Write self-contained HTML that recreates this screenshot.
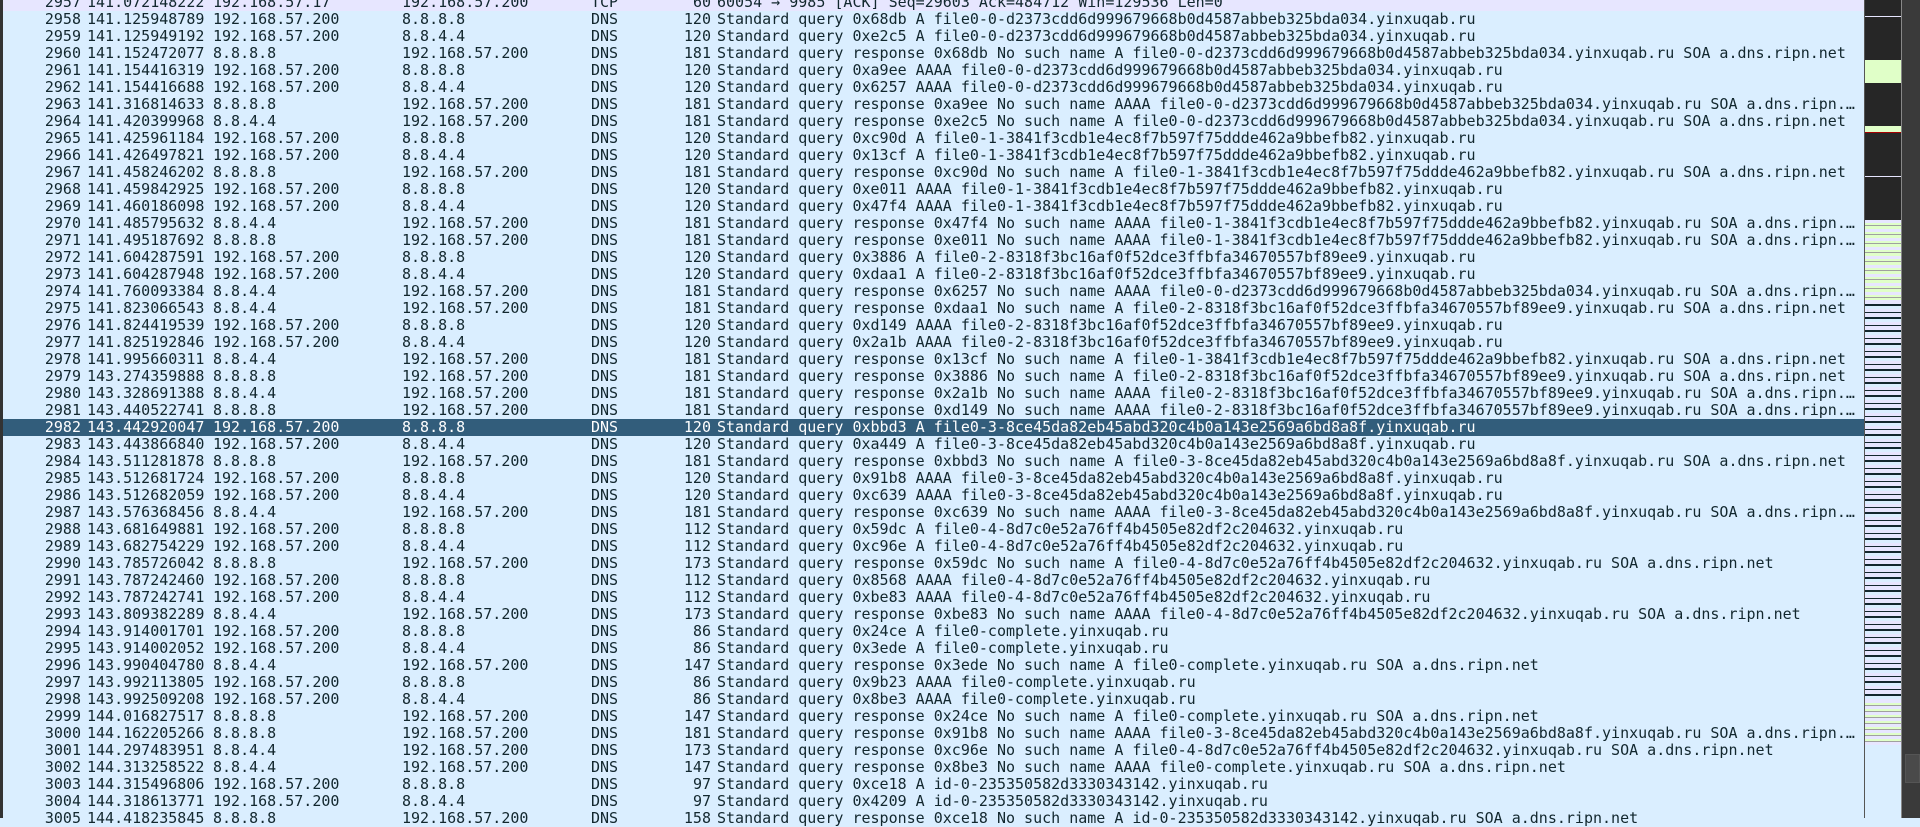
<!DOCTYPE html>
<html><head><meta charset="utf-8"><style>
html,body{margin:0;padding:0;}
body{width:1920px;height:818px;overflow:hidden;background:#daeeff;position:relative;font-family:"DejaVu Sans Mono","Liberation Mono",monospace;font-size:15px;color:#12272e;}
#list{position:absolute;left:0;top:-6px;width:1864px;}
.r{position:relative;height:17px;line-height:17px;background:#daeeff;white-space:pre;}
.r.t{background:#e7e6ff;}
.r.s{background:#325d7b;color:#fff;}
.r span{position:absolute;top:0;}
.a{left:0;width:81px;text-align:right;}
.b{left:87px;}
.c{left:213px;}
.d{left:402px;}
.e{left:591px;}
.f{left:650px;width:61px;text-align:right;}
.g{left:717px;width:1146px;overflow:hidden;text-overflow:ellipsis;}
#edge{position:absolute;left:0;top:0;width:3px;height:818px;background:#333;}
#mm{position:absolute;left:1864px;top:0;width:37px;height:818px;background:#daeeff;border-left:1px solid #555;box-sizing:border-box;}
#sb{position:absolute;left:1901px;top:0;width:19px;height:818px;background:#3a3a3a;border-left:1px solid #888;box-sizing:border-box;}
#thumb{position:absolute;left:3px;top:754px;width:13px;height:27px;background:#4a4a4a;border:1px solid #555;}
.m{position:absolute;left:0;width:36px;}
</style></head><body>
<div id="list">
<div class="r t"><span class="a">2957</span><span class="b">141.072148222</span><span class="c">192.168.57.17</span><span class="d">192.168.57.200</span><span class="e">TCP</span><span class="f">60</span><span class="g">60054 → 9985 [ACK] Seq=29603 Ack=484712 Win=129536 Len=0</span></div>
<div class="r"><span class="a">2958</span><span class="b">141.125948789</span><span class="c">192.168.57.200</span><span class="d">8.8.8.8</span><span class="e">DNS</span><span class="f">120</span><span class="g">Standard query 0x68db A file0-0-d2373cdd6d999679668b0d4587abbeb325bda034.yinxuqab.ru</span></div>
<div class="r"><span class="a">2959</span><span class="b">141.125949192</span><span class="c">192.168.57.200</span><span class="d">8.8.4.4</span><span class="e">DNS</span><span class="f">120</span><span class="g">Standard query 0xe2c5 A file0-0-d2373cdd6d999679668b0d4587abbeb325bda034.yinxuqab.ru</span></div>
<div class="r"><span class="a">2960</span><span class="b">141.152472077</span><span class="c">8.8.8.8</span><span class="d">192.168.57.200</span><span class="e">DNS</span><span class="f">181</span><span class="g">Standard query response 0x68db No such name A file0-0-d2373cdd6d999679668b0d4587abbeb325bda034.yinxuqab.ru SOA a.dns.ripn.net</span></div>
<div class="r"><span class="a">2961</span><span class="b">141.154416319</span><span class="c">192.168.57.200</span><span class="d">8.8.8.8</span><span class="e">DNS</span><span class="f">120</span><span class="g">Standard query 0xa9ee AAAA file0-0-d2373cdd6d999679668b0d4587abbeb325bda034.yinxuqab.ru</span></div>
<div class="r"><span class="a">2962</span><span class="b">141.154416688</span><span class="c">192.168.57.200</span><span class="d">8.8.4.4</span><span class="e">DNS</span><span class="f">120</span><span class="g">Standard query 0x6257 AAAA file0-0-d2373cdd6d999679668b0d4587abbeb325bda034.yinxuqab.ru</span></div>
<div class="r"><span class="a">2963</span><span class="b">141.316814633</span><span class="c">8.8.8.8</span><span class="d">192.168.57.200</span><span class="e">DNS</span><span class="f">181</span><span class="g">Standard query response 0xa9ee No such name AAAA file0-0-d2373cdd6d999679668b0d4587abbeb325bda034.yinxuqab.ru SOA a.dns.ripn.net</span></div>
<div class="r"><span class="a">2964</span><span class="b">141.420399968</span><span class="c">8.8.4.4</span><span class="d">192.168.57.200</span><span class="e">DNS</span><span class="f">181</span><span class="g">Standard query response 0xe2c5 No such name A file0-0-d2373cdd6d999679668b0d4587abbeb325bda034.yinxuqab.ru SOA a.dns.ripn.net</span></div>
<div class="r"><span class="a">2965</span><span class="b">141.425961184</span><span class="c">192.168.57.200</span><span class="d">8.8.8.8</span><span class="e">DNS</span><span class="f">120</span><span class="g">Standard query 0xc90d A file0-1-3841f3cdb1e4ec8f7b597f75ddde462a9bbefb82.yinxuqab.ru</span></div>
<div class="r"><span class="a">2966</span><span class="b">141.426497821</span><span class="c">192.168.57.200</span><span class="d">8.8.4.4</span><span class="e">DNS</span><span class="f">120</span><span class="g">Standard query 0x13cf A file0-1-3841f3cdb1e4ec8f7b597f75ddde462a9bbefb82.yinxuqab.ru</span></div>
<div class="r"><span class="a">2967</span><span class="b">141.458246202</span><span class="c">8.8.8.8</span><span class="d">192.168.57.200</span><span class="e">DNS</span><span class="f">181</span><span class="g">Standard query response 0xc90d No such name A file0-1-3841f3cdb1e4ec8f7b597f75ddde462a9bbefb82.yinxuqab.ru SOA a.dns.ripn.net</span></div>
<div class="r"><span class="a">2968</span><span class="b">141.459842925</span><span class="c">192.168.57.200</span><span class="d">8.8.8.8</span><span class="e">DNS</span><span class="f">120</span><span class="g">Standard query 0xe011 AAAA file0-1-3841f3cdb1e4ec8f7b597f75ddde462a9bbefb82.yinxuqab.ru</span></div>
<div class="r"><span class="a">2969</span><span class="b">141.460186098</span><span class="c">192.168.57.200</span><span class="d">8.8.4.4</span><span class="e">DNS</span><span class="f">120</span><span class="g">Standard query 0x47f4 AAAA file0-1-3841f3cdb1e4ec8f7b597f75ddde462a9bbefb82.yinxuqab.ru</span></div>
<div class="r"><span class="a">2970</span><span class="b">141.485795632</span><span class="c">8.8.4.4</span><span class="d">192.168.57.200</span><span class="e">DNS</span><span class="f">181</span><span class="g">Standard query response 0x47f4 No such name AAAA file0-1-3841f3cdb1e4ec8f7b597f75ddde462a9bbefb82.yinxuqab.ru SOA a.dns.ripn.net</span></div>
<div class="r"><span class="a">2971</span><span class="b">141.495187692</span><span class="c">8.8.8.8</span><span class="d">192.168.57.200</span><span class="e">DNS</span><span class="f">181</span><span class="g">Standard query response 0xe011 No such name AAAA file0-1-3841f3cdb1e4ec8f7b597f75ddde462a9bbefb82.yinxuqab.ru SOA a.dns.ripn.net</span></div>
<div class="r"><span class="a">2972</span><span class="b">141.604287591</span><span class="c">192.168.57.200</span><span class="d">8.8.8.8</span><span class="e">DNS</span><span class="f">120</span><span class="g">Standard query 0x3886 A file0-2-8318f3bc16af0f52dce3ffbfa34670557bf89ee9.yinxuqab.ru</span></div>
<div class="r"><span class="a">2973</span><span class="b">141.604287948</span><span class="c">192.168.57.200</span><span class="d">8.8.4.4</span><span class="e">DNS</span><span class="f">120</span><span class="g">Standard query 0xdaa1 A file0-2-8318f3bc16af0f52dce3ffbfa34670557bf89ee9.yinxuqab.ru</span></div>
<div class="r"><span class="a">2974</span><span class="b">141.760093384</span><span class="c">8.8.4.4</span><span class="d">192.168.57.200</span><span class="e">DNS</span><span class="f">181</span><span class="g">Standard query response 0x6257 No such name AAAA file0-0-d2373cdd6d999679668b0d4587abbeb325bda034.yinxuqab.ru SOA a.dns.ripn.net</span></div>
<div class="r"><span class="a">2975</span><span class="b">141.823066543</span><span class="c">8.8.4.4</span><span class="d">192.168.57.200</span><span class="e">DNS</span><span class="f">181</span><span class="g">Standard query response 0xdaa1 No such name A file0-2-8318f3bc16af0f52dce3ffbfa34670557bf89ee9.yinxuqab.ru SOA a.dns.ripn.net</span></div>
<div class="r"><span class="a">2976</span><span class="b">141.824419539</span><span class="c">192.168.57.200</span><span class="d">8.8.8.8</span><span class="e">DNS</span><span class="f">120</span><span class="g">Standard query 0xd149 AAAA file0-2-8318f3bc16af0f52dce3ffbfa34670557bf89ee9.yinxuqab.ru</span></div>
<div class="r"><span class="a">2977</span><span class="b">141.825192846</span><span class="c">192.168.57.200</span><span class="d">8.8.4.4</span><span class="e">DNS</span><span class="f">120</span><span class="g">Standard query 0x2a1b AAAA file0-2-8318f3bc16af0f52dce3ffbfa34670557bf89ee9.yinxuqab.ru</span></div>
<div class="r"><span class="a">2978</span><span class="b">141.995660311</span><span class="c">8.8.4.4</span><span class="d">192.168.57.200</span><span class="e">DNS</span><span class="f">181</span><span class="g">Standard query response 0x13cf No such name A file0-1-3841f3cdb1e4ec8f7b597f75ddde462a9bbefb82.yinxuqab.ru SOA a.dns.ripn.net</span></div>
<div class="r"><span class="a">2979</span><span class="b">143.274359888</span><span class="c">8.8.8.8</span><span class="d">192.168.57.200</span><span class="e">DNS</span><span class="f">181</span><span class="g">Standard query response 0x3886 No such name A file0-2-8318f3bc16af0f52dce3ffbfa34670557bf89ee9.yinxuqab.ru SOA a.dns.ripn.net</span></div>
<div class="r"><span class="a">2980</span><span class="b">143.328691388</span><span class="c">8.8.4.4</span><span class="d">192.168.57.200</span><span class="e">DNS</span><span class="f">181</span><span class="g">Standard query response 0x2a1b No such name AAAA file0-2-8318f3bc16af0f52dce3ffbfa34670557bf89ee9.yinxuqab.ru SOA a.dns.ripn.net</span></div>
<div class="r"><span class="a">2981</span><span class="b">143.440522741</span><span class="c">8.8.8.8</span><span class="d">192.168.57.200</span><span class="e">DNS</span><span class="f">181</span><span class="g">Standard query response 0xd149 No such name AAAA file0-2-8318f3bc16af0f52dce3ffbfa34670557bf89ee9.yinxuqab.ru SOA a.dns.ripn.net</span></div>
<div class="r s"><span class="a">2982</span><span class="b">143.442920047</span><span class="c">192.168.57.200</span><span class="d">8.8.8.8</span><span class="e">DNS</span><span class="f">120</span><span class="g">Standard query 0xbbd3 A file0-3-8ce45da82eb45abd320c4b0a143e2569a6bd8a8f.yinxuqab.ru</span></div>
<div class="r"><span class="a">2983</span><span class="b">143.443866840</span><span class="c">192.168.57.200</span><span class="d">8.8.4.4</span><span class="e">DNS</span><span class="f">120</span><span class="g">Standard query 0xa449 A file0-3-8ce45da82eb45abd320c4b0a143e2569a6bd8a8f.yinxuqab.ru</span></div>
<div class="r"><span class="a">2984</span><span class="b">143.511281878</span><span class="c">8.8.8.8</span><span class="d">192.168.57.200</span><span class="e">DNS</span><span class="f">181</span><span class="g">Standard query response 0xbbd3 No such name A file0-3-8ce45da82eb45abd320c4b0a143e2569a6bd8a8f.yinxuqab.ru SOA a.dns.ripn.net</span></div>
<div class="r"><span class="a">2985</span><span class="b">143.512681724</span><span class="c">192.168.57.200</span><span class="d">8.8.8.8</span><span class="e">DNS</span><span class="f">120</span><span class="g">Standard query 0x91b8 AAAA file0-3-8ce45da82eb45abd320c4b0a143e2569a6bd8a8f.yinxuqab.ru</span></div>
<div class="r"><span class="a">2986</span><span class="b">143.512682059</span><span class="c">192.168.57.200</span><span class="d">8.8.4.4</span><span class="e">DNS</span><span class="f">120</span><span class="g">Standard query 0xc639 AAAA file0-3-8ce45da82eb45abd320c4b0a143e2569a6bd8a8f.yinxuqab.ru</span></div>
<div class="r"><span class="a">2987</span><span class="b">143.576368456</span><span class="c">8.8.4.4</span><span class="d">192.168.57.200</span><span class="e">DNS</span><span class="f">181</span><span class="g">Standard query response 0xc639 No such name AAAA file0-3-8ce45da82eb45abd320c4b0a143e2569a6bd8a8f.yinxuqab.ru SOA a.dns.ripn.net</span></div>
<div class="r"><span class="a">2988</span><span class="b">143.681649881</span><span class="c">192.168.57.200</span><span class="d">8.8.8.8</span><span class="e">DNS</span><span class="f">112</span><span class="g">Standard query 0x59dc A file0-4-8d7c0e52a76ff4b4505e82df2c204632.yinxuqab.ru</span></div>
<div class="r"><span class="a">2989</span><span class="b">143.682754229</span><span class="c">192.168.57.200</span><span class="d">8.8.4.4</span><span class="e">DNS</span><span class="f">112</span><span class="g">Standard query 0xc96e A file0-4-8d7c0e52a76ff4b4505e82df2c204632.yinxuqab.ru</span></div>
<div class="r"><span class="a">2990</span><span class="b">143.785726042</span><span class="c">8.8.8.8</span><span class="d">192.168.57.200</span><span class="e">DNS</span><span class="f">173</span><span class="g">Standard query response 0x59dc No such name A file0-4-8d7c0e52a76ff4b4505e82df2c204632.yinxuqab.ru SOA a.dns.ripn.net</span></div>
<div class="r"><span class="a">2991</span><span class="b">143.787242460</span><span class="c">192.168.57.200</span><span class="d">8.8.8.8</span><span class="e">DNS</span><span class="f">112</span><span class="g">Standard query 0x8568 AAAA file0-4-8d7c0e52a76ff4b4505e82df2c204632.yinxuqab.ru</span></div>
<div class="r"><span class="a">2992</span><span class="b">143.787242741</span><span class="c">192.168.57.200</span><span class="d">8.8.4.4</span><span class="e">DNS</span><span class="f">112</span><span class="g">Standard query 0xbe83 AAAA file0-4-8d7c0e52a76ff4b4505e82df2c204632.yinxuqab.ru</span></div>
<div class="r"><span class="a">2993</span><span class="b">143.809382289</span><span class="c">8.8.4.4</span><span class="d">192.168.57.200</span><span class="e">DNS</span><span class="f">173</span><span class="g">Standard query response 0xbe83 No such name AAAA file0-4-8d7c0e52a76ff4b4505e82df2c204632.yinxuqab.ru SOA a.dns.ripn.net</span></div>
<div class="r"><span class="a">2994</span><span class="b">143.914001701</span><span class="c">192.168.57.200</span><span class="d">8.8.8.8</span><span class="e">DNS</span><span class="f">86</span><span class="g">Standard query 0x24ce A file0-complete.yinxuqab.ru</span></div>
<div class="r"><span class="a">2995</span><span class="b">143.914002052</span><span class="c">192.168.57.200</span><span class="d">8.8.4.4</span><span class="e">DNS</span><span class="f">86</span><span class="g">Standard query 0x3ede A file0-complete.yinxuqab.ru</span></div>
<div class="r"><span class="a">2996</span><span class="b">143.990404780</span><span class="c">8.8.4.4</span><span class="d">192.168.57.200</span><span class="e">DNS</span><span class="f">147</span><span class="g">Standard query response 0x3ede No such name A file0-complete.yinxuqab.ru SOA a.dns.ripn.net</span></div>
<div class="r"><span class="a">2997</span><span class="b">143.992113805</span><span class="c">192.168.57.200</span><span class="d">8.8.8.8</span><span class="e">DNS</span><span class="f">86</span><span class="g">Standard query 0x9b23 AAAA file0-complete.yinxuqab.ru</span></div>
<div class="r"><span class="a">2998</span><span class="b">143.992509208</span><span class="c">192.168.57.200</span><span class="d">8.8.4.4</span><span class="e">DNS</span><span class="f">86</span><span class="g">Standard query 0x8be3 AAAA file0-complete.yinxuqab.ru</span></div>
<div class="r"><span class="a">2999</span><span class="b">144.016827517</span><span class="c">8.8.8.8</span><span class="d">192.168.57.200</span><span class="e">DNS</span><span class="f">147</span><span class="g">Standard query response 0x24ce No such name A file0-complete.yinxuqab.ru SOA a.dns.ripn.net</span></div>
<div class="r"><span class="a">3000</span><span class="b">144.162205266</span><span class="c">8.8.8.8</span><span class="d">192.168.57.200</span><span class="e">DNS</span><span class="f">181</span><span class="g">Standard query response 0x91b8 No such name AAAA file0-3-8ce45da82eb45abd320c4b0a143e2569a6bd8a8f.yinxuqab.ru SOA a.dns.ripn.net</span></div>
<div class="r"><span class="a">3001</span><span class="b">144.297483951</span><span class="c">8.8.4.4</span><span class="d">192.168.57.200</span><span class="e">DNS</span><span class="f">173</span><span class="g">Standard query response 0xc96e No such name A file0-4-8d7c0e52a76ff4b4505e82df2c204632.yinxuqab.ru SOA a.dns.ripn.net</span></div>
<div class="r"><span class="a">3002</span><span class="b">144.313258522</span><span class="c">8.8.4.4</span><span class="d">192.168.57.200</span><span class="e">DNS</span><span class="f">147</span><span class="g">Standard query response 0x8be3 No such name AAAA file0-complete.yinxuqab.ru SOA a.dns.ripn.net</span></div>
<div class="r"><span class="a">3003</span><span class="b">144.315496806</span><span class="c">192.168.57.200</span><span class="d">8.8.8.8</span><span class="e">DNS</span><span class="f">97</span><span class="g">Standard query 0xce18 A id-0-235350582d3330343142.yinxuqab.ru</span></div>
<div class="r"><span class="a">3004</span><span class="b">144.318613771</span><span class="c">192.168.57.200</span><span class="d">8.8.4.4</span><span class="e">DNS</span><span class="f">97</span><span class="g">Standard query 0x4209 A id-0-235350582d3330343142.yinxuqab.ru</span></div>
<div class="r"><span class="a">3005</span><span class="b">144.418235845</span><span class="c">8.8.8.8</span><span class="d">192.168.57.200</span><span class="e">DNS</span><span class="f">158</span><span class="g">Standard query response 0xce18 No such name A id-0-235350582d3330343142.yinxuqab.ru SOA a.dns.ripn.net</span></div>
</div>
<div id="edge"></div>
<div id="mm">
<div class="m" style="top:0;height:220px;background:#262626"></div>
<div class="m" style="top:16px;height:1px;background:#e7e6ff"></div>
<div class="m" style="top:60px;height:23px;background:#e0ffc8"></div>
<div class="m" style="top:126px;height:6px;background:#e0ffc8"></div>
<div class="m" style="top:132px;height:1px;background:#a40000"></div>
<div class="m" style="top:176px;height:1px;background:#e7e6ff"></div>
<div class="m" style="top:220px;height:80px;background:repeating-linear-gradient(#e7e6ff 0 3px,#e0ffc8 3px 5px,#a0a0a0 5px 6px,#e0ffc8 6px 9px)"></div>
<div class="m" style="top:300px;height:400px;background:repeating-linear-gradient(#e7e6ff 0 4px,#12272e 4px 6px,#daeeff 6px 9px,#e7e6ff 9px 12px,#12272e 12px 13px)"></div>
<div class="m" style="top:700px;height:45px;background:repeating-linear-gradient(#e7e6ff 0 3px,#e0ffc8 3px 5px,#a0a0a0 5px 6px)"></div>
</div>
<div id="sb"><div id="thumb"></div></div>
</body></html>
